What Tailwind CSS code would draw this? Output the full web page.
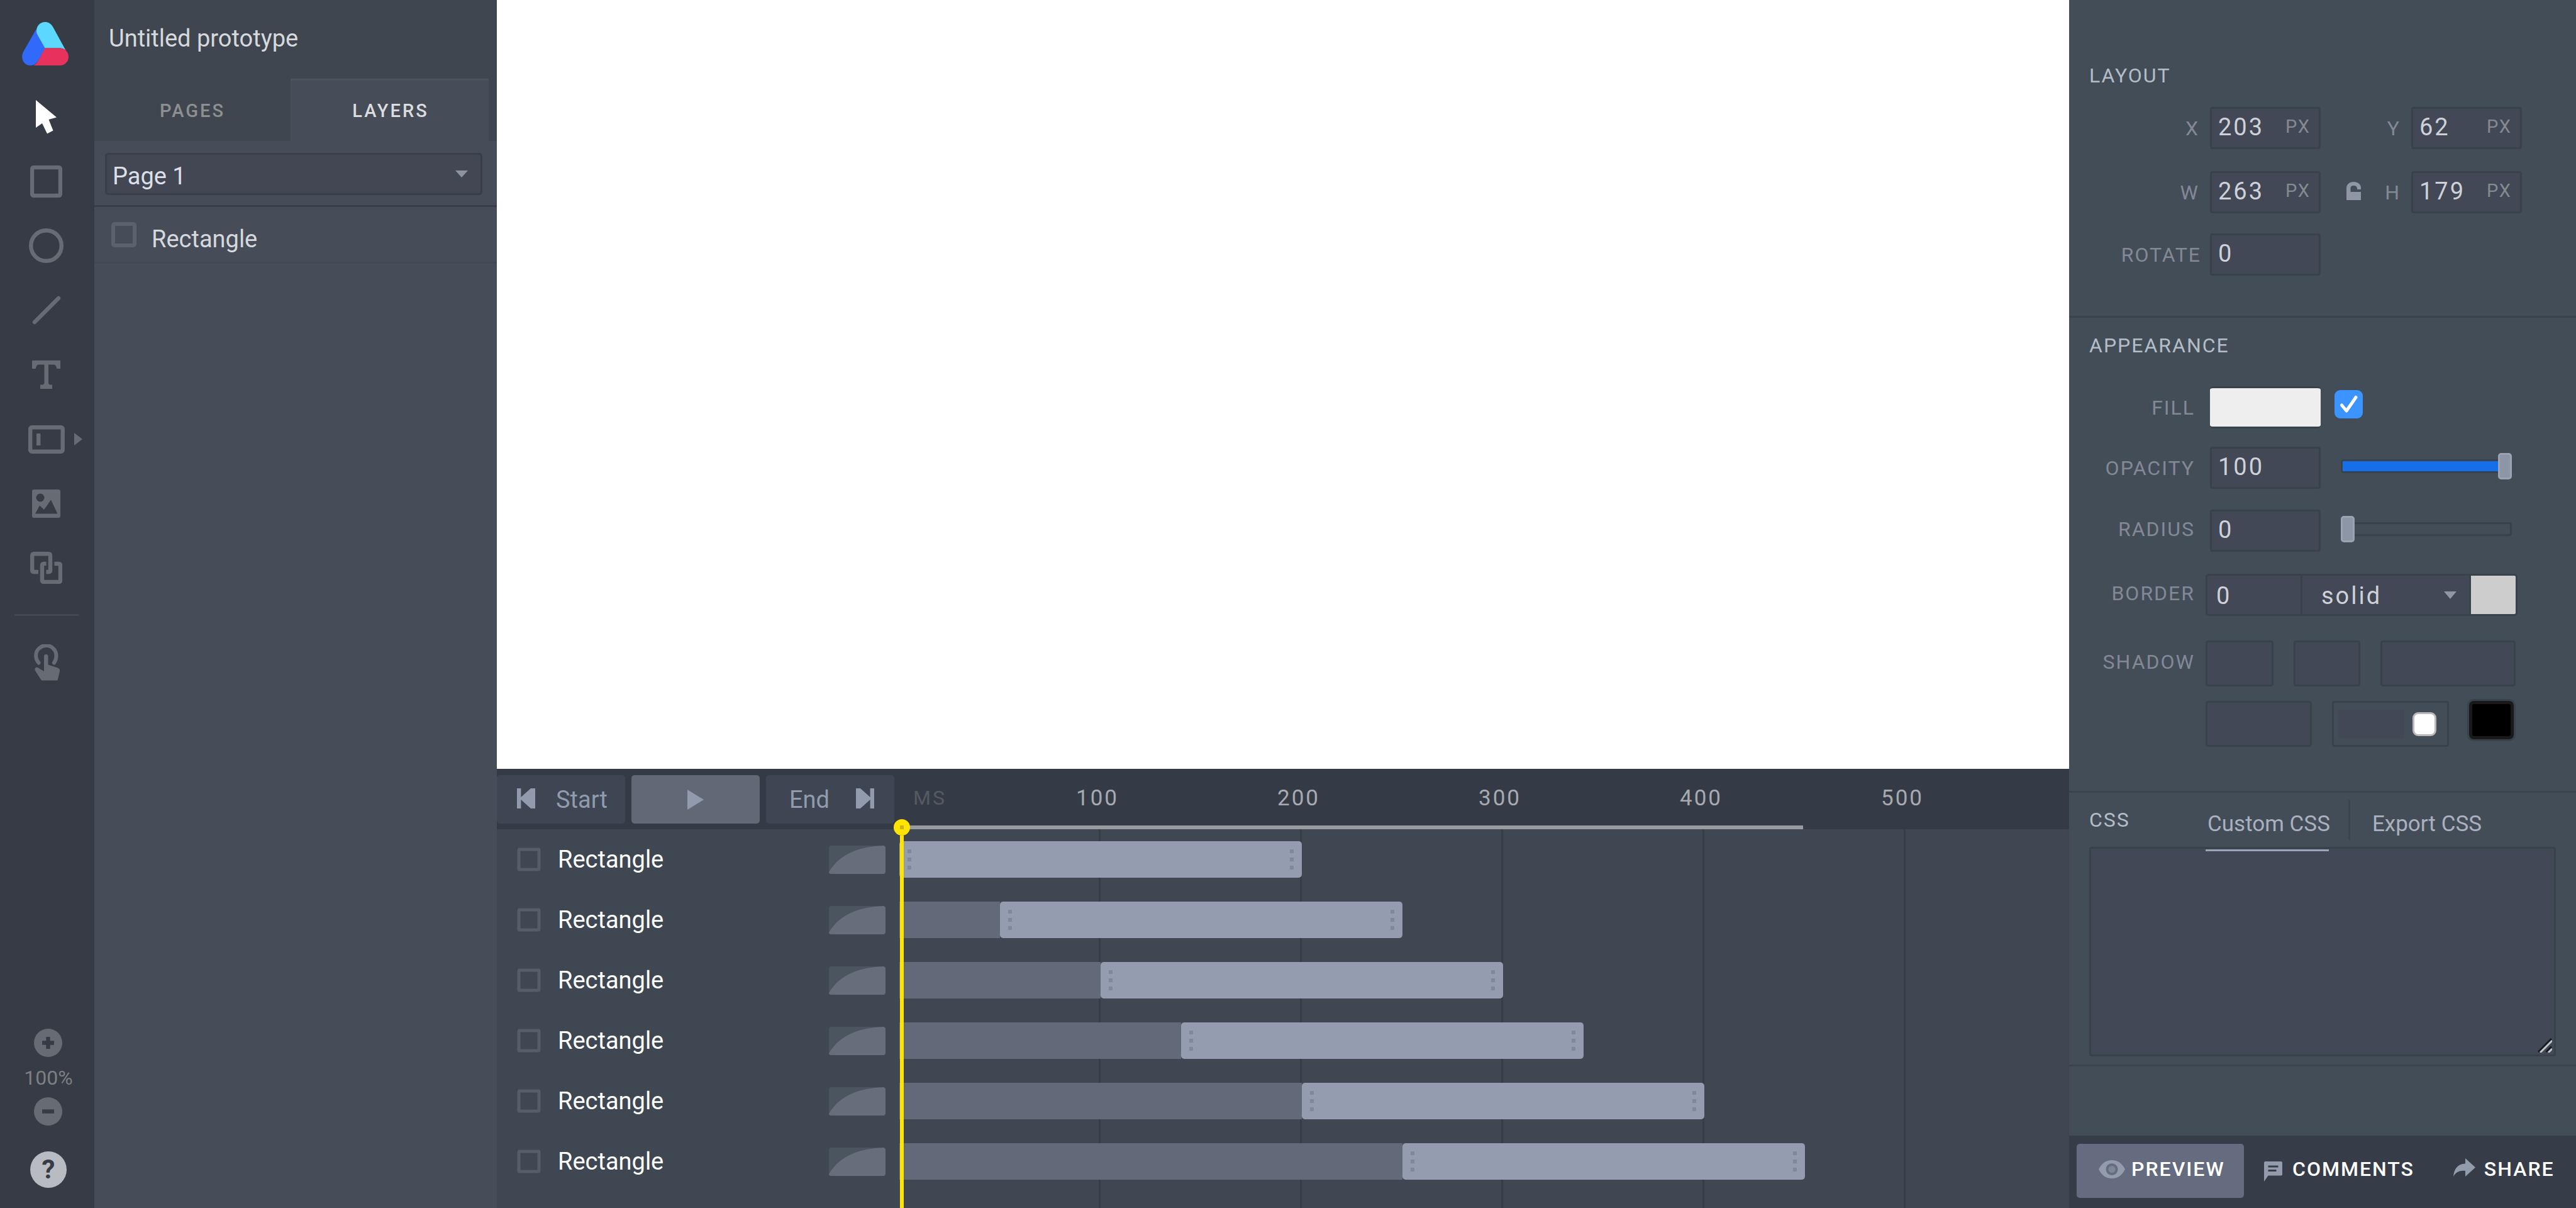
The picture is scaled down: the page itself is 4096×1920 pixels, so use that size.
<!DOCTYPE html>
<html lang="en">
<head>
<meta charset="utf-8">
<title>Untitled prototype</title>
<script src="https://cdn.jsdelivr.net/npm/@tailwindcss/browser@4"></script>
</head>
<body class="flex h-screen overflow-hidden bg-[#434d58] font-[Roboto,sans-serif] text-[38px] leading-none text-[#d5d8dc]">

<!-- shared shapes -->
<svg class="hidden" aria-hidden="true">
  <symbol id="layer-box" viewBox="0 0 40 40"><rect x="3" y="3" width="34" height="34" rx="2" fill="none" stroke="currentColor" stroke-width="6"/></symbol>
  <symbol id="row-box" viewBox="0 0 38 38"><rect x="3" y="3" width="32" height="32" rx="1" fill="none" stroke="currentColor" stroke-width="5"/></symbol>
  <symbol id="easing" viewBox="0 0 90 45"><rect width="90" height="45" rx="4" fill="#4b5560"/><path d="M0 42C14 18 40 2 86 0Q90 0 90 4V41Q90 45 86 45H4Q0 45 0 42Z" fill="#656e7a"/></symbol>
  <symbol id="grip" viewBox="0 0 6 32"><path d="M0 0h6v6H0zM0 13h6v6H0zM0 26h6v6H0z" fill="#7f8999"/></symbol>
</svg>

<!-- tools -->
<nav class="flex w-[150px] shrink-0 flex-col items-center bg-[#363b45] text-[#676c74]" aria-label="Tools">
  <a href="#" aria-label="Home" class="mt-[35px] mb-[31px] block pr-1.5">
    <svg class="block h-[69px] w-[74px]" viewBox="0 0 74 69"><path d="M22.500 11.500L2 47.500C-3 58 3 69 13 69C18.500 69 23 66.500 26 61L37 41.500L25 20Z" fill="#3169fb"/><path d="M36.500 0C28.500 0 23 6.500 23 14C23 17 24 19.500 25.500 22L36.500 41.500H61Q66 41.500 69.500 45L49 7.500C46 2.500 42 0 36.500 0Z" fill="#5cd8ff"/><path d="M36.500 41.500H60.500C68 41.500 74 47.500 74 55.200S68 69 60.500 69H18Q23 67 26 61Z" fill="#e6325c"/></svg>
  </a>
  <div class="flex h-[819px] w-full flex-col">
    <button aria-label="Select" class="flex flex-1 items-center justify-center pr-[3px] text-white"><svg class="h-[54px] w-[34px]" viewBox="0 0 34 54"><path d="M0 0L33 27.500L20.500 31L27.500 48.500L18 53.500L10 37L0 44Z" fill="currentColor"/></svg></button>
    <button aria-label="Rectangle" class="flex flex-1 items-center justify-center pr-[3px]"><svg class="size-[51px]" viewBox="0 0 51 51"><rect x="3" y="3" width="45" height="45" rx="3" fill="none" stroke="currentColor" stroke-width="6.400"/></svg></button>
    <button aria-label="Ellipse" class="flex flex-1 items-center justify-center pr-[3px]"><svg class="size-[55px]" viewBox="0 0 55 55"><circle cx="27.500" cy="27.500" r="24.300" fill="none" stroke="currentColor" stroke-width="6.400"/></svg></button>
    <button aria-label="Line" class="flex flex-1 items-center justify-center pr-[3px]"><svg class="size-[46px]" viewBox="0 0 46 46"><path d="M4 42L42 4" stroke="currentColor" stroke-width="6.400" stroke-linecap="round"/></svg></button>
    <button aria-label="Text" class="flex flex-1 items-center justify-center pr-[3px]"><svg class="size-[45px]" viewBox="0 0 45 45"><path d="M0 0H45V13H39.500L38 9Q37.500 6.500 35 6.500H26V36L27.500 38.500H32V45H13V38.500H17.500L19.500 36V6.500H10Q7.500 6.500 7 9L5.500 13H0Z" fill="currentColor"/></svg></button>
    <button aria-label="Form input" class="relative flex flex-1 items-center justify-center pr-[3px]"><svg class="h-[45px] w-[58px]" viewBox="0 0 58 45"><rect x="3.200" y="3.200" width="51.500" height="38.500" rx="2.500" fill="none" stroke="currentColor" stroke-width="6.400"/><path d="M13 13h6.400v19H13z" fill="currentColor"/></svg><svg class="absolute right-[19px] h-5 w-[13px]" viewBox="0 0 13 20"><path d="M0 0L13 10L0 20Z" fill="currentColor"/></svg></button>
    <button aria-label="Image" class="flex flex-1 items-center justify-center pr-[3px]"><svg class="size-[45px]" viewBox="0 0 45 45"><path fill-rule="evenodd" d="M3 0H42Q45 0 45 3V42Q45 45 42 45H3Q0 45 0 42V3Q0 0 3 0ZM13 6.500A6.500 6.500 0 1 0 13 19.500A6.500 6.500 0 1 0 13 6.500ZM5 38.500H40.500L30 16.500L19 32L12 25.500Z" fill="currentColor"/></svg></button>
    <button aria-label="Group" class="flex flex-1 items-center justify-center pr-[3px]"><svg class="size-[51px]" viewBox="0 0 51 51"><path d="M13 32H6Q3.200 32 3.200 29.500V6Q3.200 3.200 6 3.200H29.500Q32 3.200 32 6V29.500Q32 32 29.500 32H25.500M25.500 19H22Q19 19 19 22V45Q19 48 22 48H45Q48 48 48 45V22Q48 19 45 19H38.500" fill="none" stroke="currentColor" stroke-width="6.400"/></svg></button>
  </div>
  <hr class="mt-[22px] mr-[3px] w-[102px] border-t-[3px] border-[#434954]">
  <button aria-label="Interaction" class="mt-[45px]"><svg class="h-[58px] w-[42px]" viewBox="0 0 42 58"><path d="M7.500 29.500C1 22 2 10 9.500 5.500A15.800 15.800 0 0 1 31.500 7.500C37 14 36.500 23 32 29.500" fill="none" stroke="currentColor" stroke-width="6" stroke-linecap="round"/><path d="M16 43V19Q16 16 19.200 16T22.500 19V32.500L38 37.500Q41.500 39 41 43L37.500 57.500H12L2 42Q0 37 5 36.500Z" fill="currentColor"/></svg></button>
  <div class="mt-auto flex flex-col items-center pl-1 text-[32px] text-[#7d8083]">
    <button aria-label="Zoom in"><svg class="block size-[45px]" viewBox="0 0 45 45"><circle cx="22.500" cy="22.500" r="22.500" fill="#676c74"/><path d="M19.300 13h6.400v6.300H32v6.400h-6.300V32h-6.400v-6.300H13v-6.400h6.300z" fill="#363b45"/></svg></button>
    <span class="pt-[17px] pb-[15px]">100%</span>
    <button aria-label="Zoom out"><svg class="block size-[45px]" viewBox="0 0 45 45"><circle cx="22.500" cy="22.500" r="22.500" fill="#676c74"/><path d="M13 19.300h19v6.400H13z" fill="#363b45"/></svg></button>
    <button aria-label="Help" class="mt-[41px] mb-8 flex size-[58px] items-center justify-center rounded-full bg-[#b8bbc1] text-[42px] font-bold text-[#363b45]">?</button>
  </div>
</nav>

<!-- layers panel -->
<aside class="flex w-[640px] shrink-0 flex-col bg-[#464c58]">
  <header class="bg-[#3f464f]">
    <h1 class="flex h-[125px] items-center pr-6 pb-1 pl-[23px]">Untitled prototype</h1>
    <div class="mr-[13px] flex h-[99px] text-[29px] font-medium tracking-[3px]">
      <button class="flex-1 pt-[3px] text-[#8d8f91]">PAGES</button>
      <button class="flex-1 border-t-[3px] border-[#4c535f] bg-[#464c58] pl-[3px] text-[#dcdddf]">LAYERS</button>
    </div>
  </header>
  <div class="border-b-[3px] border-[#383d49] px-[17px] pt-[19px] pr-[23px] pb-4">
    <div class="relative flex items-center">
      <select aria-label="Page" class="h-[67px] w-full appearance-none rounded-[5px] border-[3px] border-[#393f4a] bg-[#424753] pt-1.5 pl-[9px] leading-[50px] text-[#dcdfe8]"><option>Page 1</option></select>
      <svg class="pointer-events-none absolute right-[23px] h-[11px] w-5 text-[#8d94a1]" viewBox="0 0 20 11"><path d="M0 0H20L10 11Z" fill="currentColor"/></svg>
    </div>
  </div>
  <ul>
    <li class="flex h-[90px] items-center gap-6 border-b-[3px] border-[#424854] pt-1.5 pl-[27px]">
      <svg class="mb-1.5 size-10 text-[#5b616d]"><use href="#layer-box"/></svg>
      <span class="pt-2">Rectangle</span>
    </li>
  </ul>
</aside>

<!-- canvas and timeline -->
<main class="flex min-w-0 flex-1 flex-col">
  <div class="flex-1 bg-white"></div>

  <section class="relative flex h-[698px] flex-col bg-[#3e4752]" aria-label="Timeline">
    <div class="flex h-24 shrink-0 bg-[#353b46]">
      <div class="grid w-[640px] shrink-0 grid-cols-3 gap-2.5 pt-2.5 pr-2 pb-[9px] text-[#919bad]">
        <button class="flex items-center gap-[33px] rounded-[5px] bg-[#3d4652] pl-8"><svg class="mb-[3px] h-8 w-[29px]" viewBox="0 0 29 32"><path d="M0 0H6.400V14L22 0H29V32H22L6.400 18V32H0Z" fill="currentColor"/></svg>Start</button>
        <button aria-label="Play" class="flex items-center justify-center rounded-[5px] bg-[#616876]"><svg class="h-8 w-[26px]" viewBox="0 0 26 32"><path d="M0 0L26 16L0 32Z" fill="currentColor"/></svg></button>
        <button class="flex items-center justify-end gap-[42px] rounded-[5px] bg-[#3d4652] pr-8">End<svg class="mb-[3px] h-8 w-[29px]" viewBox="0 0 29 32"><path d="M29 0H22.600V14L7 0H0V32H7L22.600 18V32H29Z" fill="currentColor"/></svg></button>
      </div>
      <div class="relative flex min-w-0 flex-1 items-center overflow-hidden pb-1 text-[35px] tracking-[3px] text-[#a7aaae]">
        <span class="w-[155px] shrink-0 pl-[22px] text-[32px] text-[#555a61]">MS</span>
        <span class="w-80 shrink-0 text-center">100</span>
        <span class="w-80 shrink-0 text-center">200</span>
        <span class="w-80 shrink-0 text-center">300</span>
        <span class="w-80 shrink-0 text-center">400</span>
        <span class="w-80 shrink-0 text-center">500</span>
        <span class="absolute bottom-0 left-0 h-1.5 bg-[#999ba1]" style="width:1437px"></span>
      </div>
    </div>

    <div class="relative flex-1">
      <div class="absolute inset-y-0 right-0 left-[640px] flex overflow-hidden">
        <i class="w-80 shrink-0 border-r-[3px] border-[#353e47]"></i>
        <i class="w-80 shrink-0 border-r-[3px] border-[#353e47]"></i>
        <i class="w-80 shrink-0 border-r-[3px] border-[#353e47]"></i>
        <i class="w-80 shrink-0 border-r-[3px] border-[#353e47]"></i>
        <i class="w-80 shrink-0 border-r-[3px] border-[#353e47]"></i>
      </div>
      <ul class="relative text-white">
        <li class="flex h-24 items-center">
          <div class="flex w-[640px] shrink-0 items-center pr-[22px] pl-8"><svg class="size-[38px] text-[#565d69]"><use href="#row-box"/></svg><span class="ml-[27px] flex-1">Rectangle</span><svg class="h-[45px] w-[90px]"><use href="#easing"/></svg></div>
          <div class="h-[58px] bg-[#626978]" style="width:0px"></div>
          <div class="flex h-[58px] items-center justify-between rounded-[5px] bg-[#939daf] px-[13px]" style="width:640px"><svg class="h-8 w-1.5"><use href="#grip"/></svg><svg class="h-8 w-1.5"><use href="#grip"/></svg></div>
        </li>
        <li class="flex h-24 items-center">
          <div class="flex w-[640px] shrink-0 items-center pr-[22px] pl-8"><svg class="size-[38px] text-[#565d69]"><use href="#row-box"/></svg><span class="ml-[27px] flex-1">Rectangle</span><svg class="h-[45px] w-[90px]"><use href="#easing"/></svg></div>
          <div class="h-[58px] bg-[#626978]" style="width:160px"></div>
          <div class="flex h-[58px] items-center justify-between rounded-[5px] bg-[#939daf] px-[13px]" style="width:640px"><svg class="h-8 w-1.5"><use href="#grip"/></svg><svg class="h-8 w-1.5"><use href="#grip"/></svg></div>
        </li>
        <li class="flex h-24 items-center">
          <div class="flex w-[640px] shrink-0 items-center pr-[22px] pl-8"><svg class="size-[38px] text-[#565d69]"><use href="#row-box"/></svg><span class="ml-[27px] flex-1">Rectangle</span><svg class="h-[45px] w-[90px]"><use href="#easing"/></svg></div>
          <div class="h-[58px] bg-[#626978]" style="width:320px"></div>
          <div class="flex h-[58px] items-center justify-between rounded-[5px] bg-[#939daf] px-[13px]" style="width:640px"><svg class="h-8 w-1.5"><use href="#grip"/></svg><svg class="h-8 w-1.5"><use href="#grip"/></svg></div>
        </li>
        <li class="flex h-24 items-center">
          <div class="flex w-[640px] shrink-0 items-center pr-[22px] pl-8"><svg class="size-[38px] text-[#565d69]"><use href="#row-box"/></svg><span class="ml-[27px] flex-1">Rectangle</span><svg class="h-[45px] w-[90px]"><use href="#easing"/></svg></div>
          <div class="h-[58px] bg-[#626978]" style="width:448px"></div>
          <div class="flex h-[58px] items-center justify-between rounded-[5px] bg-[#939daf] px-[13px]" style="width:640px"><svg class="h-8 w-1.5"><use href="#grip"/></svg><svg class="h-8 w-1.5"><use href="#grip"/></svg></div>
        </li>
        <li class="flex h-24 items-center">
          <div class="flex w-[640px] shrink-0 items-center pr-[22px] pl-8"><svg class="size-[38px] text-[#565d69]"><use href="#row-box"/></svg><span class="ml-[27px] flex-1">Rectangle</span><svg class="h-[45px] w-[90px]"><use href="#easing"/></svg></div>
          <div class="h-[58px] bg-[#626978]" style="width:640px"></div>
          <div class="flex h-[58px] items-center justify-between rounded-[5px] bg-[#939daf] px-[13px]" style="width:640px"><svg class="h-8 w-1.5"><use href="#grip"/></svg><svg class="h-8 w-1.5"><use href="#grip"/></svg></div>
        </li>
        <li class="flex h-24 items-center">
          <div class="flex w-[640px] shrink-0 items-center pr-[22px] pl-8"><svg class="size-[38px] text-[#565d69]"><use href="#row-box"/></svg><span class="ml-[27px] flex-1">Rectangle</span><svg class="h-[45px] w-[90px]"><use href="#easing"/></svg></div>
          <div class="h-[58px] bg-[#626978]" style="width:800px"></div>
          <div class="flex h-[58px] items-center justify-between rounded-[5px] bg-[#939daf] px-[13px]" style="width:640px"><svg class="h-8 w-1.5"><use href="#grip"/></svg><svg class="h-8 w-1.5"><use href="#grip"/></svg></div>
        </li>
      </ul>
    </div>

    <!-- playhead -->
    <div class="absolute top-20 bottom-0 left-[631px] flex w-[26px] flex-col items-center">
      <div class="flex size-[26px] shrink-0 items-center justify-center rounded-full bg-[#ffe400]"><i class="size-1.5 bg-[#c9b31c]"></i></div>
      <div class="w-1.5 flex-1 bg-[#ffe400]"></div>
    </div>
  </section>
</main>

<!-- inspector -->
<aside class="flex w-[806px] shrink-0 flex-col bg-[#434d58] text-[32px] tracking-[2px] text-[#838896]">
  <section class="border-b-[3px] border-[#3a444e] px-8 pt-[100px] pb-16">
    <h2 class="mb-[30px] flex h-10 items-center text-[#b4bdc7]">LAYOUT</h2>
    <div class="mb-[35px] flex items-center">
      <label for="x" class="w-48 pr-[17px] text-right">X</label>
      <div class="flex h-[67px] w-44 items-center rounded-[4px] border-[3px] border-[#38424b] bg-[#424855] pr-[13px] pb-1 pl-2.5"><input id="x" value="203" class="w-full min-w-0 flex-1 text-[38px] tracking-[3px] text-[#ced2d8] outline-none"><span class="text-[29px] text-[#868a90]">PX</span></div>
      <label for="y" class="w-36 pr-[17px] text-right">Y</label>
      <div class="flex h-[67px] w-44 items-center rounded-[4px] border-[3px] border-[#38424b] bg-[#424855] pr-[13px] pb-1 pl-2.5"><input id="y" value="62" class="w-full min-w-0 flex-1 text-[38px] tracking-[3px] text-[#ced2d8] outline-none"><span class="text-[29px] text-[#868a90]">PX</span></div>
    </div>
    <div class="mb-8 flex items-center">
      <label for="w" class="w-48 pr-[17px] text-right">W</label>
      <div class="flex h-[67px] w-44 items-center rounded-[4px] border-[3px] border-[#38424b] bg-[#424855] pr-[13px] pb-1 pl-2.5"><input id="w" value="263" class="w-full min-w-0 flex-1 text-[38px] tracking-[3px] text-[#ced2d8] outline-none"><span class="text-[29px] text-[#868a90]">PX</span></div>
      <div class="flex w-36 items-center justify-between pr-[17px] pl-[41px]">
        <button aria-label="Lock proportions" class="mb-1"><svg class="block h-[29px] w-[23px]" viewBox="0 0 23 29"><path d="M0 29V10C0 4 5 0 11.500 0S23 4 23 9V12H17V10Q16.500 6 11.500 6T6.500 10V16H23V29Z" fill="#8f97a7"/></svg></button>
        <label for="h">H</label>
      </div>
      <div class="flex h-[67px] w-44 items-center rounded-[4px] border-[3px] border-[#38424b] bg-[#424855] pr-[13px] pb-1 pl-2.5"><input id="h" value="179" class="w-full min-w-0 flex-1 text-[38px] tracking-[3px] text-[#ced2d8] outline-none"><span class="text-[29px] text-[#868a90]">PX</span></div>
    </div>
    <div class="flex items-center">
      <label for="rotate" class="w-48 pr-3.5 text-right">ROTATE</label>
      <input id="rotate" value="0" class="h-[67px] w-44 rounded-[4px] border-[3px] border-[#38424b] bg-[#424855] pb-1 pl-2.5 text-[38px] tracking-[3px] text-[#ced2d8] outline-none">
    </div>
  </section>

  <section class="border-b-[3px] border-[#3a444e] px-8 pt-6 pb-[70px]">
    <h2 class="mb-[45px] flex h-10 items-center text-[#b4bdc7]">APPEARANCE</h2>
    <div class="mb-[29px] flex items-center">
      <label for="fill" class="w-48 pr-6 text-right">FILL</label>
      <input id="fill" type="color" value="#eeeeee" class="h-[67px] w-44 rounded-[5px] border-y-[3px] border-[#38424b] [&::-webkit-color-swatch-wrapper]:p-0 [&::-webkit-color-swatch]:rounded-[3px] [&::-webkit-color-swatch]:border-0">
      <span class="relative mb-2.5 ml-[22px] flex">
        <input type="checkbox" checked aria-label="Fill enabled" class="size-[45px] appearance-none rounded-[9px] bg-[#3b94ff]">
        <svg class="pointer-events-none absolute inset-0 size-[45px]" viewBox="0 0 45 45"><path d="M11.500 24L19 33L34 11.500" fill="none" stroke="#fff" stroke-width="5" stroke-linecap="round" stroke-linejoin="round"/></svg>
      </span>
    </div>
    <div class="mb-[33px] flex items-center">
      <label for="opacity" class="w-48 pr-6 text-right">OPACITY</label>
      <input id="opacity" value="100" class="h-[67px] w-44 rounded-[4px] border-[3px] border-[#38424b] bg-[#424855] pb-1 pl-2.5 text-[38px] tracking-[3px] text-[#ced2d8] outline-none">
      <input type="range" min="0" max="100" value="100" aria-label="Opacity" class="mb-1.5 ml-8 h-[42px] w-[272px] appearance-none bg-transparent [&::-webkit-slider-runnable-track]:h-[22px] [&::-webkit-slider-runnable-track]:rounded-[4px] [&::-webkit-slider-runnable-track]:bg-[#166fe9] [&::-webkit-slider-runnable-track]:shadow-[inset_0_0_0_3px_#38424b] [&::-webkit-slider-thumb]:-mt-2.5 [&::-webkit-slider-thumb]:h-[42px] [&::-webkit-slider-thumb]:w-[22px] [&::-webkit-slider-thumb]:appearance-none [&::-webkit-slider-thumb]:rounded-[5px] [&::-webkit-slider-thumb]:border-[3px] [&::-webkit-slider-thumb]:border-[#9aa3b2] [&::-webkit-slider-thumb]:bg-[#8d96a6]">
    </div>
    <div class="mb-[35px] flex items-center">
      <label for="radius" class="mb-1.5 w-48 pr-6 text-right">RADIUS</label>
      <input id="radius" value="0" class="h-[67px] w-44 rounded-[4px] border-[3px] border-[#38424b] bg-[#424855] pb-1 pl-2.5 text-[38px] tracking-[3px] text-[#ced2d8] outline-none">
      <input type="range" min="0" max="100" value="0" aria-label="Radius" class="mb-1.5 ml-8 h-[42px] w-[272px] appearance-none bg-transparent [&::-webkit-slider-runnable-track]:h-[22px] [&::-webkit-slider-runnable-track]:rounded-[4px] [&::-webkit-slider-runnable-track]:shadow-[inset_0_0_0_3px_#38424b] [&::-webkit-slider-thumb]:-mt-2.5 [&::-webkit-slider-thumb]:h-[42px] [&::-webkit-slider-thumb]:w-[22px] [&::-webkit-slider-thumb]:appearance-none [&::-webkit-slider-thumb]:rounded-[5px] [&::-webkit-slider-thumb]:border-[3px] [&::-webkit-slider-thumb]:border-[#9aa3b2] [&::-webkit-slider-thumb]:bg-[#8d96a6]">
    </div>
    <div class="mb-[39px] flex items-center">
      <label for="border" class="mb-1.5 w-[185px] pr-[17px] text-right">BORDER</label>
      <div class="flex h-[67px] w-[496px] overflow-hidden rounded-[5px] border-[3px] border-[#38424b] bg-[#424855] text-[38px] tracking-[3px] text-[#ced2d8]">
        <input id="border" value="0" class="w-[151px] border-r-[3px] border-[#38424b] pt-0.5 pl-3.5 outline-none">
        <div class="relative flex flex-1 items-center">
          <select aria-label="Border style" class="h-full w-full appearance-none border-r-[3px] border-[#38424b] pt-0.5 pl-[30px] leading-[50px]"><option>solid</option></select>
          <svg class="pointer-events-none absolute right-[23px] h-3 w-5" viewBox="0 0 20 12"><path d="M0 0H20L10 12Z" fill="#8f97a7"/></svg>
        </div>
        <input type="color" value="#cdcdcd" aria-label="Border color" class="h-full w-[71px] [&::-webkit-color-swatch-wrapper]:p-0 [&::-webkit-color-swatch]:rounded-none [&::-webkit-color-swatch]:border-0">
      </div>
    </div>
    <div class="mb-[23px] flex items-center">
      <label for="shadow-x" class="mb-1.5 w-[185px] pr-[17px] text-right">SHADOW</label>
      <input id="shadow-x" class="mr-8 h-[73px] w-[108px] rounded-[4px] border-[3px] border-[#38424b] bg-[#424855]">
      <input aria-label="Shadow y" class="mr-8 h-[73px] w-[106px] rounded-[4px] border-[3px] border-[#38424b] bg-[#424855]">
      <input aria-label="Shadow blur" class="h-[73px] w-[215px] rounded-[4px] border-[3px] border-[#38424b] bg-[#424855]">
    </div>
    <div class="ml-[185px] flex items-start">
      <input aria-label="Shadow spread" class="mr-8 h-[73px] w-[169px] rounded-[4px] border-[3px] border-[#38424b] bg-[#424855]">
      <div class="mr-8 flex h-[73px] w-[186px] items-center justify-between rounded-[4px] border-[3px] border-[#38424b] pr-[17px] pl-[7px]">
        <input aria-label="Shadow inset" class="h-[45px] w-[105px] bg-[#424855]">
        <input type="checkbox" aria-label="Inset" class="size-[38px] appearance-none rounded-[9px] border-[3px] border-[#b9b9bb] bg-white">
      </div>
      <input type="color" value="#000000" aria-label="Shadow color" class="h-[61px] w-[71px] overflow-hidden rounded-[7px] border-[5px] border-[#191919] bg-black outline-[3px] outline-[#38424b] [&::-webkit-color-swatch-wrapper]:p-0 [&::-webkit-color-swatch]:rounded-none [&::-webkit-color-swatch]:border-0">
    </div>
  </section>

  <section class="border-b-[3px] border-[#3a444e] px-8 pb-[13px]">
    <div class="flex h-[86px] items-center">
      <h2 class="w-[188px] text-[#b4bdc7]"><label for="css">CSS</label></h2>
      <div class="flex h-16 text-[35px] tracking-normal text-[#aab0bf]">
        <button class="relative mr-[29px] pt-3">Custom CSS<span class="absolute right-0.5 -bottom-[18px] -left-[3px] z-10 h-[3px] bg-[#9ca5b5]"></span></button>
        <button class="border-l-[3px] border-[#3a444e] pt-3 pl-[35px]">Export CSS</button>
      </div>
    </div>
    <div class="relative flex">
      <textarea id="css" class="h-[333px] w-full resize-none rounded-[4px] border-[3px] border-[#38424b] bg-[#424855]"></textarea>
      <svg class="pointer-events-none absolute right-1.5 bottom-1.5 size-[23px]" viewBox="0 0 23 23" fill="none" stroke-width="3"><path d="M1 22L22 1M13.500 22L22 13.500" stroke="#16191d"/><path d="M4 23L23 4M17 23L23 17" stroke="#c3c5c9"/></svg>
    </div>
  </section>

  <footer class="mt-auto flex h-[115px] items-start bg-[#373d48] pt-[13px] pl-3 font-medium text-white">
    <button class="flex h-[86px] w-[266px] items-center rounded-[5px] bg-[#656c7f] pb-1.5 pl-[35px]"><svg class="mr-2.5 h-[29px] w-[42px] shrink-0" viewBox="0 0 42 29"><path fill-rule="evenodd" d="M21 0C11 0 4 6 0 14.500C4 23 11 29 21 29S38 23 42 14.500C38 6 31 0 21 0ZM21 5A9.500 9.500 0 1 1 21 24A9.500 9.500 0 1 1 21 5Z" fill="#929cac"/><circle cx="21" cy="14.500" r="5.500" fill="#7d8698"/></svg>PREVIEW</button>
    <button class="ml-8 flex h-[86px] items-center pb-1.5"><svg class="mt-2 mr-4 h-8 w-[29px]" viewBox="0 0 29 32"><path fill-rule="evenodd" d="M2 0H27Q29 0 29 2V20.500Q29 22.500 27 22.500H6.500L0 32V2Q0 0 2 0ZM6.500 6.500V9.500H22.500V6.500ZM6.500 13V16H19.500V13Z" fill="#929cac"/></svg>COMMENTS</button>
    <button class="ml-[62px] flex h-[86px] items-center pb-1.5"><svg class="mr-3.5 mb-1.5 h-[29px] w-[35px]" viewBox="0 0 35 29"><path d="M19 0L35 14.500L19 29V20C10 19 4 22 0 29C1 18 6 9 19 8.500Z" fill="#929cac"/></svg>SHARE</button>
  </footer>
</aside>
</body>
</html>
